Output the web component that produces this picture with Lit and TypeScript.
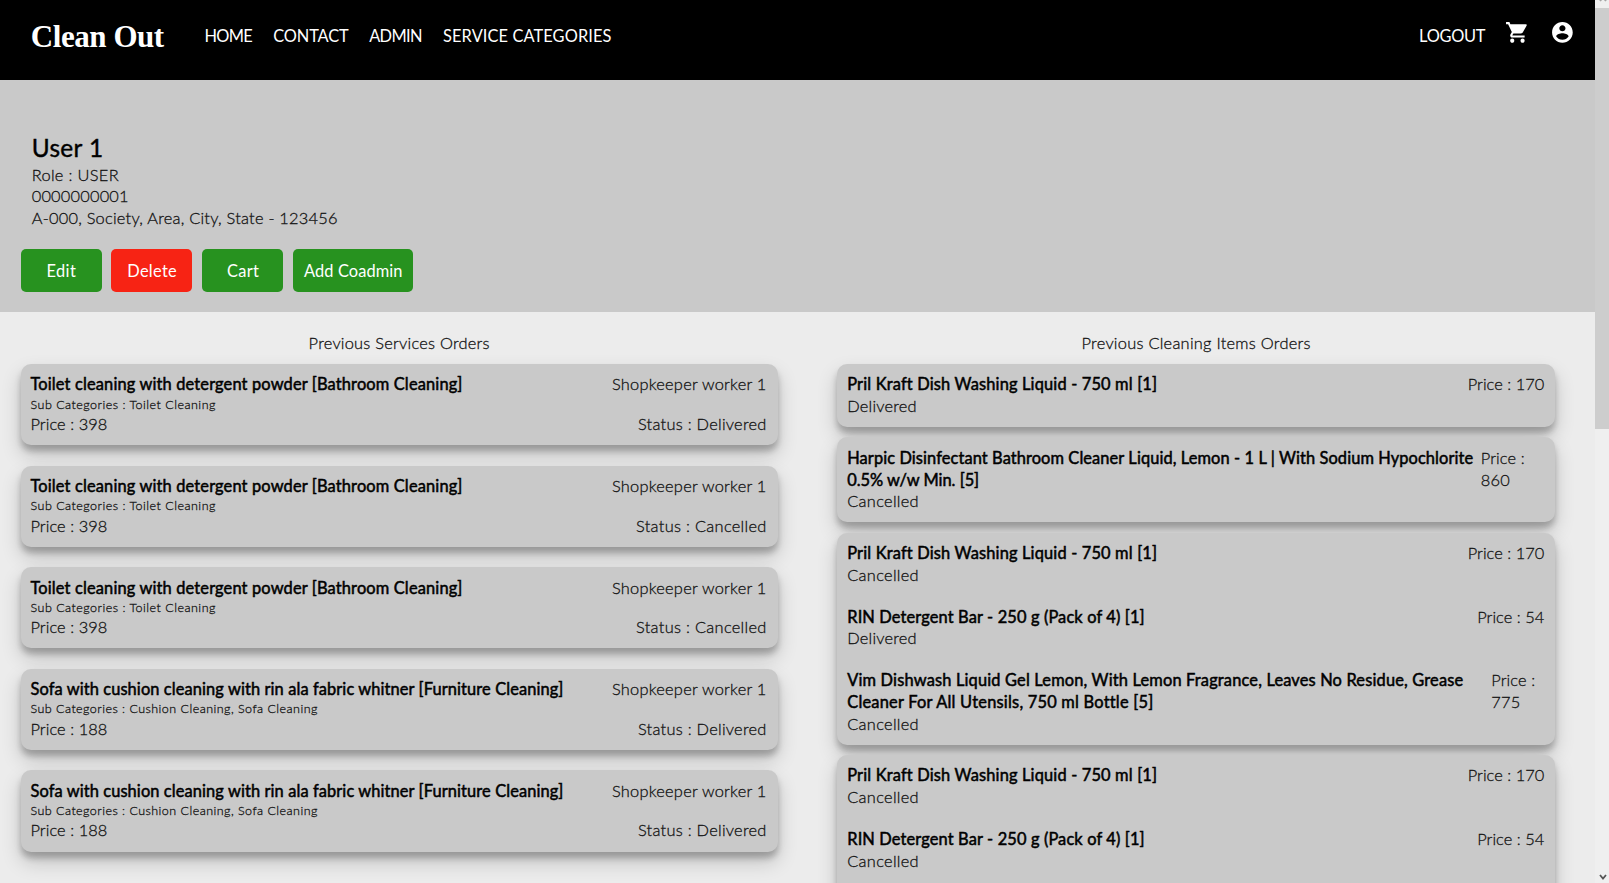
import { LitElement, html, css, svg } from "lit";
import { customElement, property } from "lit/decorators.js";

/** One line of text, tracked so that it fills the given width. */
@customElement("fit-text")
class FitText extends LitElement {
  @property() text = "";
  @property({ type: Number }) w = 0;
  static styles = css`
    :host { display: block; white-space: nowrap; width: max-content; padding: 0 0.8px; }
    .t { display: inline-block; }
  `;
  render() {
    return html`<span class="t">${this.text}</span>`;
  }
  updated() {
    const el = this.renderRoot.querySelector(".t") as HTMLElement;
    el.style.letterSpacing = "0px";
    const natural = el.getBoundingClientRect().width;
    const gap = (this.w - 1.6 - natural) / Math.max(1, this.text.length - 1);
    el.style.letterSpacing = gap + "px";
    el.style.marginRight = -gap + "px";
  }
}

type T = [string, number];
const t = (x: T) => html`<fit-text .text=${x[0]} .w=${x[1]}></fit-text>`;

const shop: T = ["Shopkeeper worker 1", 156];
const delivered: T = ["Delivered", 71];
const cancelled: T = ["Cancelled", 73];
const sDelivered: T = ["Status : Delivered", 130];
const sCancelled: T = ["Status : Cancelled", 132];
const toilet = {
  title: ["Toilet cleaning with detergent powder [Bathroom Cleaning]", 433.5] as T,
  sub: ["Sub Categories : Toilet Cleaning", 186.5] as T,
  price: ["Price : 398", 78.5] as T,
};
const sofa = {
  title: ["Sofa with cushion cleaning with rin ala fabric whitner [Furniture Cleaning]", 534.5] as T,
  sub: ["Sub Categories : Cushion Cleaning, Sofa Cleaning", 288.5] as T,
  price: ["Price : 188", 78.5] as T,
};
const services = [
  { ...toilet, status: sDelivered },
  { ...toilet, status: sCancelled },
  { ...toilet, status: sCancelled },
  { ...sofa, status: sDelivered },
  { ...sofa, status: sDelivered },
];

interface Item { name: T[]; price: T[]; priceBox: number; status: T; }
const pril = (status: T): Item => ({
  name: [["Pril Kraft Dish Washing Liquid - 750 ml [1]", 311]],
  price: [["Price : 170", 78]], priceBox: 78, status,
});
const rin = (status: T): Item => ({
  name: [["RIN Detergent Bar - 250 g (Pack of 4) [1]", 299]],
  price: [["Price : 54", 68.5]], priceBox: 68.5, status,
});
const harpic: Item = {
  name: [
    ["Harpic Disinfectant Bathroom Cleaner Liquid, Lemon - 1 L | With Sodium Hypochlorite", 627.5],
    ["0.5% w/w Min. [5]", 133.5],
  ],
  price: [["Price :", 45.5], ["860", 30.5]], priceBox: 65, status: cancelled,
};
const vim: Item = {
  name: [
    ["Vim Dishwash Liquid Gel Lemon, With Lemon Fragrance, Leaves No Residue, Grease", 617.5],
    ["Cleaner For All Utensils, 750 ml Bottle [5]", 307],
  ],
  price: [["Price :", 45.5], ["775", 30.5]], priceBox: 54.5, status: cancelled,
};
const itemOrders: Item[][] = [
  [pril(delivered)],
  [harpic],
  [pril(cancelled), rin(delivered), vim],
  [pril(cancelled), rin(cancelled)],
];

const cartIcon = svg`<path d="M7 18c-1.1 0-1.99.9-1.99 2S5.9 22 7 22s2-.9 2-2-.9-2-2-2zM1 2v2h2l3.6 7.59-1.35 2.45c-.16.28-.25.61-.25.96 0 1.1.9 2 2 2h12v-2H7.42c-.14 0-.25-.11-.25-.25l.03-.12.9-1.63h7.45c.75 0 1.41-.41 1.75-1.03l3.58-6.49A1.003 1.003 0 0 0 20 4H5.21l-.94-2H1zm16 16c-1.1 0-1.99.9-1.99 2s.89 2 1.99 2 2-.9 2-2-.9-2-2-2z"/>`;
const userIcon = svg`<path d="M12 2C6.48 2 2 6.48 2 12s4.48 10 10 10 10-4.48 10-10S17.52 2 12 2zm0 3c1.66 0 3 1.34 3 3s-1.34 3-3 3-3-1.34-3-3 1.34-3 3-3zm0 14.2c-2.5 0-4.71-1.28-6-3.22.03-1.99 4-3.08 6-3.08 1.99 0 5.97 1.09 6 3.08-1.29 1.94-3.5 3.22-6 3.22z"/>`;

@customElement("app-root")
class AppRoot extends LitElement {
  static styles = css`
    :host {
      display: flex; width: 100%; height: 883px; overflow: hidden;
      background: #ececec; color: #111;
      font: 300 16.4px/21.6px Lato, "Open Sans", sans-serif;
      -webkit-text-stroke: 0.28px currentColor;
    }
    * { box-sizing: border-box; }
    .page { flex: 1; min-width: 0; height: 883px; overflow: hidden; }
    .top {
      height: 80.3px; background: #000; color: #fff; display: flex;
      align-items: flex-start; padding: 0 20.2px 0 30px; font-weight: 400;
      -webkit-text-stroke: 0;
    }
    .brand { font: 700 31px/40px "Liberation Serif", serif; padding-top: 17px; width: 173.6px; }
    .nav { display: flex; padding-top: 25px; gap: 18.9px; flex: 1; }
    .out { padding-top: 25px; margin-right: 18.6px; }
    .ico { fill: #fff; width: 24.8px; height: 24.8px; margin-top: 20.4px; display: block; }
    .ico + .ico { margin-left: 20.4px; }
    .profile { height: 231.4px; background: #c9c9c9; padding: 51.6px 20.6px 0; }
    .info { padding-left: 10.3px; }
    .name { font-size: 24.4px; line-height: 32px; font-weight: 400; color: #000; -webkit-text-stroke: 0.4px #000; }
    .btns { display: flex; gap: 9.9px; margin-top: 20.6px; }
    .btn {
      height: 42.5px; min-width: 81px; padding: 0 10px; border-radius: 5px;
      background: #27921f; color: #fff; display: flex; align-items: center;
      justify-content: center; font-weight: 400; -webkit-text-stroke: 0;
    }
    .red { background: #f72314; }
    .cols { display: flex; padding: 20.4px 40px 0 20.6px; gap: 59.5px; }
    .left { width: 757px; }
    .right { width: 718px; }
    .head { display: flex; justify-content: center; height: 31.9px; }
    .stack { display: flex; flex-direction: column; }
    .left .stack { gap: 20.3px; }
    .right .stack { gap: 10.3px; }
    .card {
      background: #c9c9c9; border-radius: 10px; padding: 9.5px 10.4px 10.5px 9.1px;
      box-shadow: 0 10px 20px rgba(0, 0, 0, 0.19), 0 6px 6px rgba(0, 0, 0, 0.23);
    }
    .items { padding-left: 9.4px; padding-right: 10px; }
    .row { display: flex; justify-content: space-between; }
    .title { font-weight: 400; color: #000; -webkit-text-stroke: 0.5px #000; }
    .sub { font-size: 12.5px; line-height: 17.5px; padding-top: 0.6px; }
    .items { display: flex; flex-direction: column; gap: 20.5px; }
    .items:last-child { min-height: 212px; }
    .bar { width: 14px; height: 883px; background: #efefef; display: flex; flex-direction: column; }
    .thumb { height: 421.5px; margin-top: 5.5px; background: #cdcdcd; }
    .arrow { width: 8px; height: 6px; display: block; margin: auto 0 3px 4px; fill: none; stroke: #555; stroke-width: 1.8; }
    .up { margin: -4px 0 0 4px; stroke: #a3a3a3; }
  `;

  render() {
    return html`
      <div class="page">
        <div class="top">
          <div class="brand">${t(["Clean Out", 135])}</div>
          <div class="nav">
            ${t(["HOME", 50])}${t(["CONTACT", 77])}${t(["ADMIN", 55])}${t(["SERVICE CATEGORIES", 170])}
          </div>
          <div class="out">${t(["LOGOUT", 68])}</div>
          <svg class="ico" viewBox="0 0 24 24">${cartIcon}</svg>
          <svg class="ico" viewBox="0 0 24 24">${userIcon}</svg>
        </div>
        <div class="profile">
          <div class="info">
            <div class="name">${t(["User 1", 73])}</div>
            ${t(["Role : USER", 88.5])}${t(["0000000001", 98.5])}
            ${t(["A-000, Society, Area, City, State - 123456", 307.5])}
          </div>
          <div class="btns">
            <div class="btn">${t(["Edit", 31])}</div>
            <div class="btn red">${t(["Delete", 51])}</div>
            <div class="btn">${t(["Cart", 33.5])}</div>
            <div class="btn">${t(["Add Coadmin", 100])}</div>
          </div>
        </div>
        <div class="cols">
          <div class="left">
            <div class="head">${t(["Previous Services Orders", 182.5])}</div>
            <div class="stack">
              ${services.map((s) => html`<div class="card">
                <div class="row"><div class="title">${t(s.title)}</div>${t(shop)}</div>
                <div class="sub">${t(s.sub)}</div>
                <div class="row">${t(s.price)}${t(s.status)}</div>
              </div>`)}
            </div>
          </div>
          <div class="right">
            <div class="head">${t(["Previous Cleaning Items Orders", 230.5])}</div>
            <div class="stack">
              ${itemOrders.map((o) => html`<div class="card items">
                ${o.map((i) => html`<div class="row">
                  <div><div class="title">${i.name.map(t)}</div>${t(i.status)}</div>
                  <div style="width:${i.priceBox}px">${i.price.map(t)}</div>
                </div>`)}
              </div>`)}
            </div>
          </div>
        </div>
      </div>
      <div class="bar">
        <svg class="arrow up" viewBox="0 0 8 6"><path d="M1 5l3-3.5 3 3.5" /></svg>
        <div class="thumb"></div>
        <svg class="arrow" viewBox="0 0 8 6"><path d="M1 1l3 3.5 3-3.5" /></svg>
      </div>
    `;
  }
}
